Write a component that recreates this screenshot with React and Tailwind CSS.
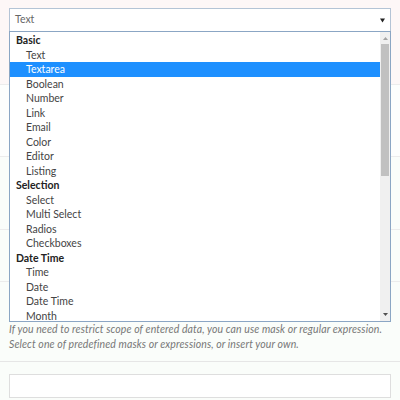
const groups = [
  { label: 'Basic', items: ['Text', 'Textarea', 'Boolean', 'Number', 'Link', 'Email', 'Color', 'Editor', 'Listing'] },
  { label: 'Selection', items: ['Select', 'Multi Select', 'Radios', 'Checkboxes'] },
  { label: 'Date Time', items: ['Time', 'Date', 'Date Time', 'Month'] },
];

const selected = 'Textarea';

const App = () => {
  return (
    <div className="relative w-[400px] h-[400px] overflow-hidden bg-[#fafdfa] text-[10.5px] font-['Lato','Open_Sans',sans-serif]">
      {/* Form rows behind the open dropdown */}
      <div className="h-[85px] bg-[#fdf7f7] border-b border-[#ececec] px-[9px] pt-2">
        <div className="flex items-center justify-between h-[24px] bg-white border border-[#b4c4d6] pl-[5px] pr-[4px]">
          <span className="text-[#666]">Text</span>
          <svg width="7" height="5" viewBox="0 0 7 5">
            <path d="M1 0.5 L6 0.5 L3.5 4.5 Z" fill="#222" />
          </svg>
        </div>
      </div>
      <div className="h-[72px] bg-[#fdfefd] border-b border-[#ececec]" />
      <div className="h-[73px] border-b border-[#ececec]" />
      <div className="h-[52px] border-b border-[#ececec]" />
      <div className="h-[80px] border-b border-[#e6e6e6] px-[9px] pt-[40px]">
        <p className="italic text-[#777] leading-[15px] tracking-[0.1px]">
          If you need to restrict scope of entered data, you can use mask or regular expression.
          <br />
          Select one of predefined masks or expressions, or insert your own.
        </p>
      </div>
      <div className="px-[9px] pt-3">
        <div className="h-[24px] bg-white border border-[#dedede]" />
      </div>

      {/* Open dropdown list */}
      <div className="absolute left-[9px] top-[31px] w-[382px] h-[291px] flex bg-white border border-[#8ba6c4]">
        <div className="flex-1 pt-[1px]">
          {groups.map((g) => (
            <div key={g.label}>
              <div className="h-[14.5px] leading-[14.5px] pl-[6px] font-bold text-[#222]">{g.label}</div>
              {g.items.map((it) => (
                <div
                  key={it}
                  className={
                    it === selected
                      ? 'h-[14.5px] leading-[14.5px] pl-[16px] bg-[#1e90ff] text-white'
                      : 'h-[14.5px] leading-[14.5px] pl-[16px] text-[#444]'
                  }
                >
                  {it}
                </div>
              ))}
            </div>
          ))}
        </div>
        {/* Scrollbar */}
        <div className="w-[10px] bg-[#f0f0f0] flex flex-col items-center">
          <svg width="7" height="12" viewBox="0 0 7 12" className="shrink-0">
            <path d="M1 8 L6 8 L3.5 5 Z" fill="#a3a3a3" />
          </svg>
          <div className="w-[8px] h-[132px] bg-[#c1c1c1]" />
          <div className="flex-1" />
          <svg width="7" height="12" viewBox="0 0 7 12" className="shrink-0">
            <path d="M1 4 L6 4 L3.5 7 Z" fill="#505050" />
          </svg>
        </div>
      </div>
    </div>
  );
};

export default App;
